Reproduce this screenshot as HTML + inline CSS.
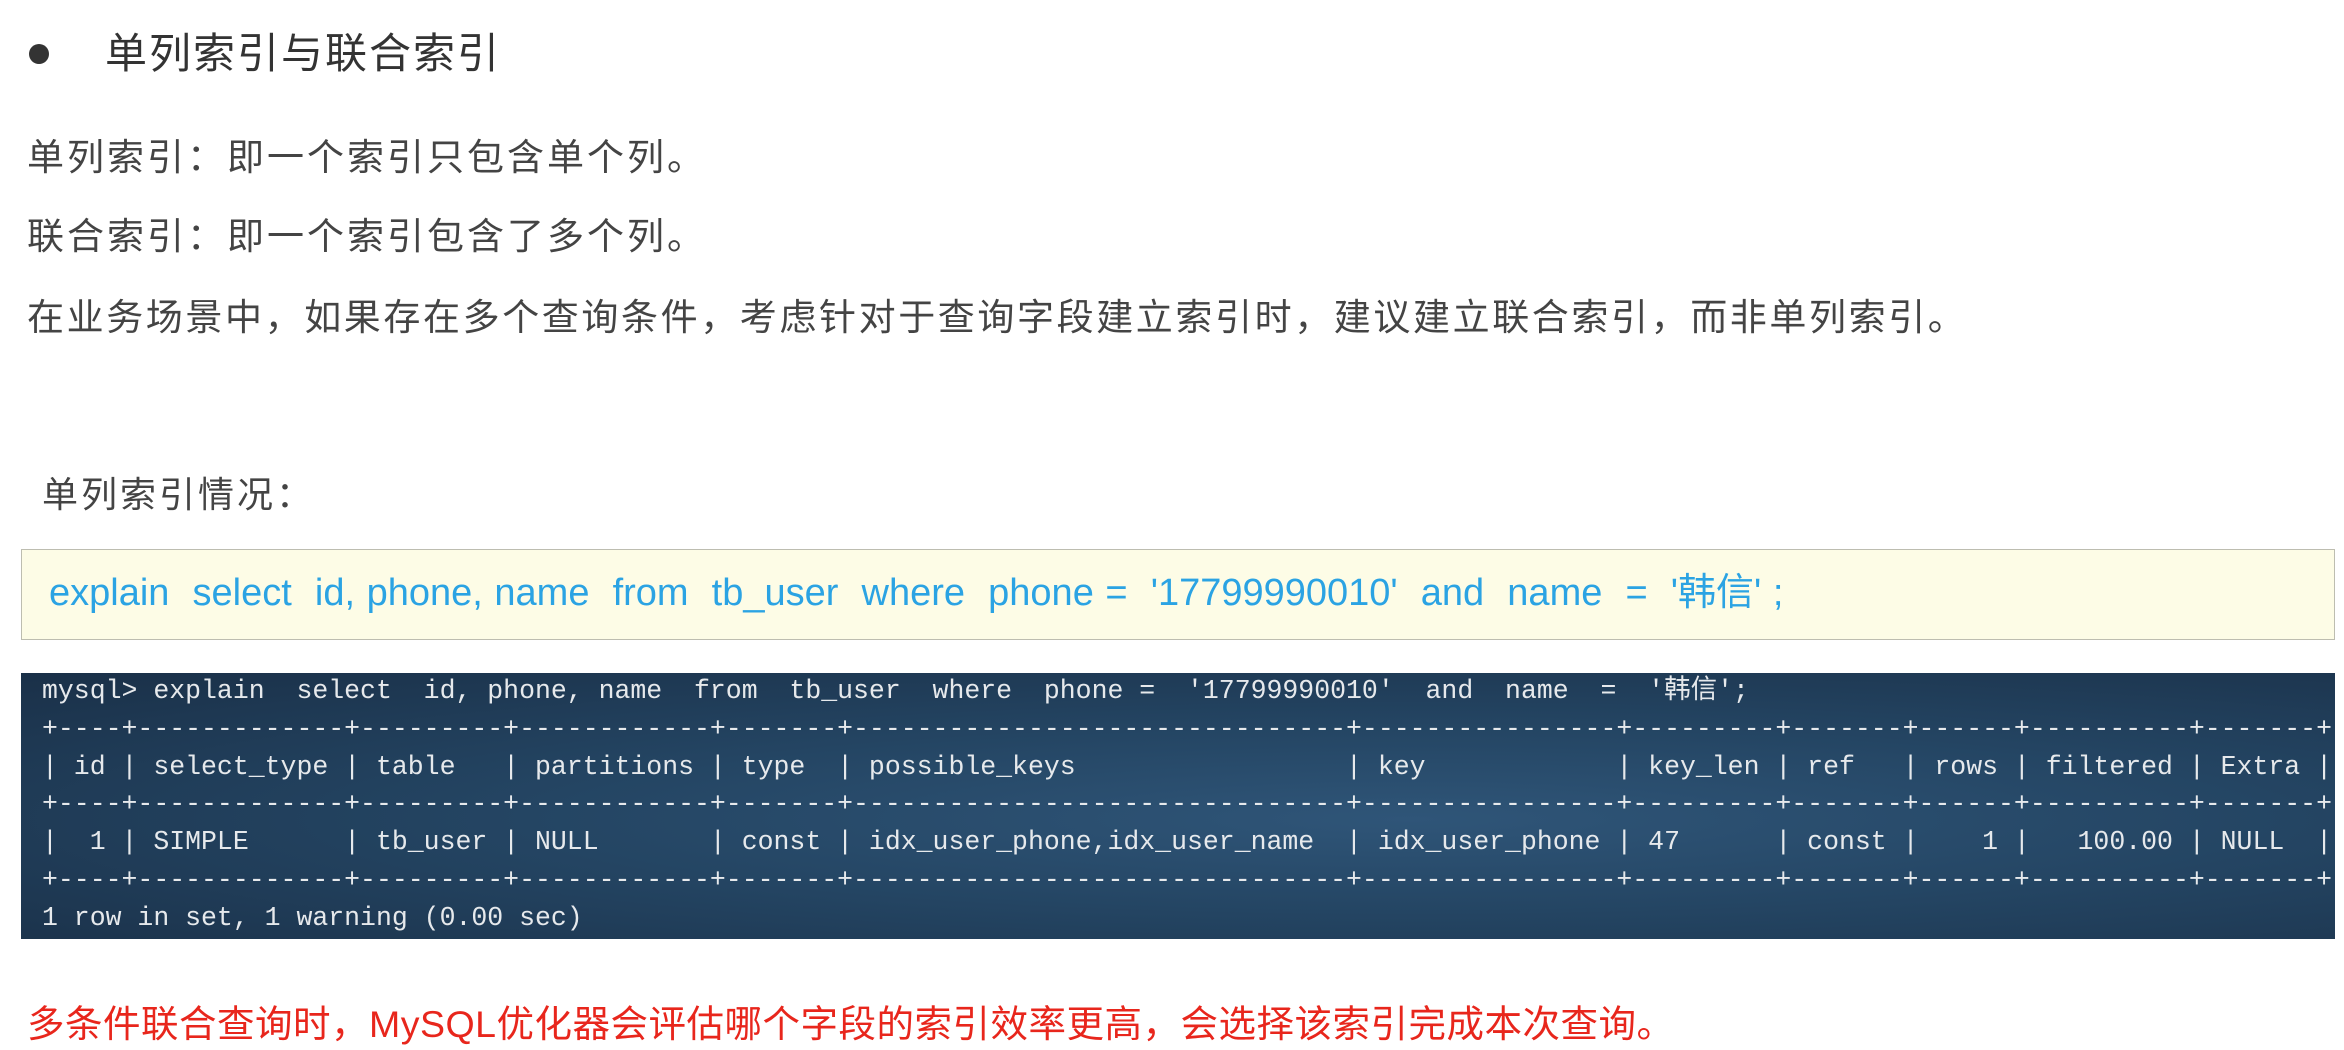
<!DOCTYPE html>
<html><head><meta charset="utf-8"><style>
body{margin:0;width:2344px;height:1050px;background:#fff;position:relative;overflow:hidden;font-family:"Liberation Sans","Noto Sans CJK SC",sans-serif}
.a{position:absolute;white-space:pre;line-height:1}
.dot{position:absolute;left:29px;top:44px;width:20px;height:20px;border-radius:50%;background:#333}
.t{left:105px;top:33px;font-size:42px;letter-spacing:2px;color:#333}
.p{left:27px;font-size:37px;letter-spacing:3px;color:#444}
.box{position:absolute;left:21px;top:549px;width:2312px;height:89px;background:#fdfce6;border:1px solid #bdbdb0}
.code{left:49px;top:574px;font-size:38px;color:#2ba3e3;word-spacing:1px}
.term{position:absolute;left:21px;top:673px;width:2314px;height:266px;background:radial-gradient(ellipse at 60% 55%,#2f5578 0%,#244563 45%,#1a3048 100%);}
.term pre{margin:0;padding:0 0 0 21px;font-family:"Liberation Mono","Noto Sans CJK SC",monospace;font-size:26.5px;line-height:37.8px;color:#e6e9ec}
.r{left:27px;top:1006px;font-size:37.5px;color:#e8261c;letter-spacing:0.5px}
</style></head><body>
<div class="dot"></div>
<div class="a t">单列索引与联合索引</div>
<div class="a p" style="top:139px">单列索引：即一个索引只包含单个列。</div>
<div class="a p" style="top:218px">联合索引：即一个索引包含了多个列。</div>
<div class="a p" style="top:299px;letter-spacing:2.6px">在业务场景中，如果存在多个查询条件，考虑针对于查询字段建立索引时，建议建立联合索引，而非单列索引。</div>
<div class="a p" style="left:42px;top:477px;font-size:36px">单列索引情况：</div>
<div class="box"></div>
<div class="a code">explain  select  id, phone, name  from  tb_user  where  phone =  '17799990010'  and  name  =  '韩信' ;</div>
<div class="term"><pre>mysql&gt; explain  select  id, phone, name  from  tb_user  where  phone =  '17799990010'  and  name  =  '韩信';
+----+-------------+---------+------------+-------+-------------------------------+----------------+---------+-------+------+----------+-------+
| id | select_type | table   | partitions | type  | possible_keys                 | key            | key_len | ref   | rows | filtered | Extra |
+----+-------------+---------+------------+-------+-------------------------------+----------------+---------+-------+------+----------+-------+
|  1 | SIMPLE      | tb_user | NULL       | const | idx_user_phone,idx_user_name  | idx_user_phone | 47      | const |    1 |   100.00 | NULL  |
+----+-------------+---------+------------+-------+-------------------------------+----------------+---------+-------+------+----------+-------+
1 row in set, 1 warning (0.00 sec)</pre></div>
<div class="a r">多条件联合查询时，MySQL优化器会评估哪个字段的索引效率更高，会选择该索引完成本次查询。</div>
</body></html>
